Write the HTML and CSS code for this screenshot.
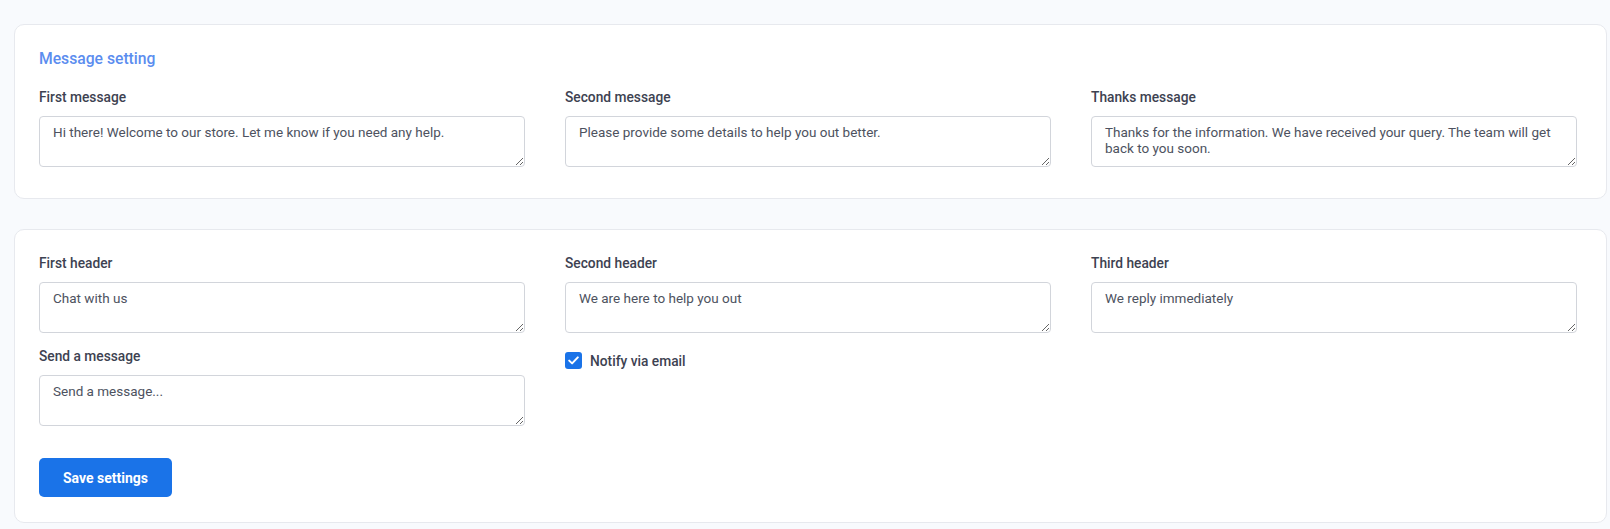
FILE: index.html
```html
<!DOCTYPE html>
<html lang="en">
<head>
<meta charset="utf-8">
<title>Message setting</title>
<link rel="stylesheet" href="styles.css">
</head>
<body>
<main class="page">
  <section class="card card-messages">
    <h2 class="card-title">Message setting</h2>
    <div class="grid">
      <div class="field">
        <label class="label" for="m1">First message</label>
        <textarea id="m1" class="input">Hi there! Welcome to our store. Let me know if you need any help.</textarea>
      </div>
      <div class="field">
        <label class="label" for="m2">Second message</label>
        <textarea id="m2" class="input">Please provide some details to help you out better.</textarea>
      </div>
      <div class="field">
        <label class="label" for="m3">Thanks message</label>
        <textarea id="m3" class="input">Thanks for the information. We have received your query. The team will get back to you soon.</textarea>
      </div>
    </div>
  </section>

  <section class="card card-headers">
    <div class="grid">
      <div class="col">
        <div class="field">
          <label class="label" for="h1">First header</label>
          <textarea id="h1" class="input">Chat with us</textarea>
        </div>
        <div class="field field-next">
          <label class="label" for="h4">Send a message</label>
          <textarea id="h4" class="input" placeholder="Send a message..."></textarea>
        </div>
        <button class="btn" type="button">Save settings</button>
      </div>
      <div class="col">
        <div class="field">
          <label class="label" for="h2">Second header</label>
          <textarea id="h2" class="input">We are here to help you out</textarea>
        </div>
        <label class="check">
          <span class="check-box">
            <svg width="11" height="9" viewBox="0 0 11 9" aria-hidden="true"><path d="M1.2 4.6 L4.1 7.4 L9.8 1.4" fill="none" stroke="#fff" stroke-width="2" stroke-linecap="round" stroke-linejoin="round"/></svg>
          </span>
          <span class="check-text">Notify via email</span>
        </label>
      </div>
      <div class="col">
        <div class="field">
          <label class="label" for="h3">Third header</label>
          <textarea id="h3" class="input">We reply immediately</textarea>
        </div>
      </div>
    </div>
  </section>
</main>
</body>
</html>
```

FILE: styles.css
```css
* { box-sizing: border-box; }

html, body {
  margin: 0;
  background: #f8fafd;
}

body {
  font-family: Roboto, "Liberation Sans", Arial, sans-serif;
  color: #3d4251;
}

.page {
  padding: 24px 3px 0 14px;
}

.card {
  background: #ffffff;
  border: 1px solid #e7e9ee;
  border-radius: 10px;
  padding: 24px 24px 31px 24px;
}

.card-headers {
  margin-top: 30px;
  padding-top: 25px;
  padding-bottom: 25px;
}

.card-title {
  margin: 0 0 21px 0;
  font-size: 15.7px;
  line-height: 19px;
  font-weight: 500;
  color: #5b8def;
}

.grid {
  display: grid;
  grid-template-columns: repeat(3, 486px);
  column-gap: 40px;
  align-items: start;
}

.col {
  display: flex;
  flex-direction: column;
  align-items: flex-start;
}

.field {
  display: flex;
  flex-direction: column;
  width: 100%;
}

.field-next {
  margin-top: 15px;
}

.label {
  display: block;
  font-size: 13.75px;
  line-height: 16px;
  font-weight: 500;
  color: #3d4251;
  margin-bottom: 11px;
}

.input {
  display: block;
  width: 486px;
  height: 51px;
  margin: 0;
  padding: 7px 13px;
  border: 1px solid #d2d5db;
  border-radius: 4px;
  background: #ffffff;
  font-family: Roboto, "Liberation Sans", Arial, sans-serif;
  font-size: 13.5px;
  line-height: 16px;
  color: #4d5260;
  resize: vertical;
  outline: none;
}

.input::placeholder {
  color: #4d5260;
  opacity: 1;
}

.btn {
  margin-top: 32px;
  height: 39px;
  padding: 0 24px;
  border: 0;
  border-radius: 5px;
  background: #1a73e8;
  color: #ffffff;
  font-family: Roboto, "Liberation Sans", Arial, sans-serif;
  font-size: 14px;
  font-weight: 700;
  cursor: pointer;
}

.check {
  display: flex;
  align-items: center;
  gap: 8px;
  margin-top: 19px;
  cursor: pointer;
}

.check-box {
  width: 17px;
  height: 17px;
  border-radius: 3px;
  background: #1a73e8;
  display: flex;
  align-items: center;
  justify-content: center;
}

.check-box svg { display: block; }

.check-text {
  font-size: 13.75px;
  line-height: 16px;
  font-weight: 500;
  color: #3d4251;
}
```
